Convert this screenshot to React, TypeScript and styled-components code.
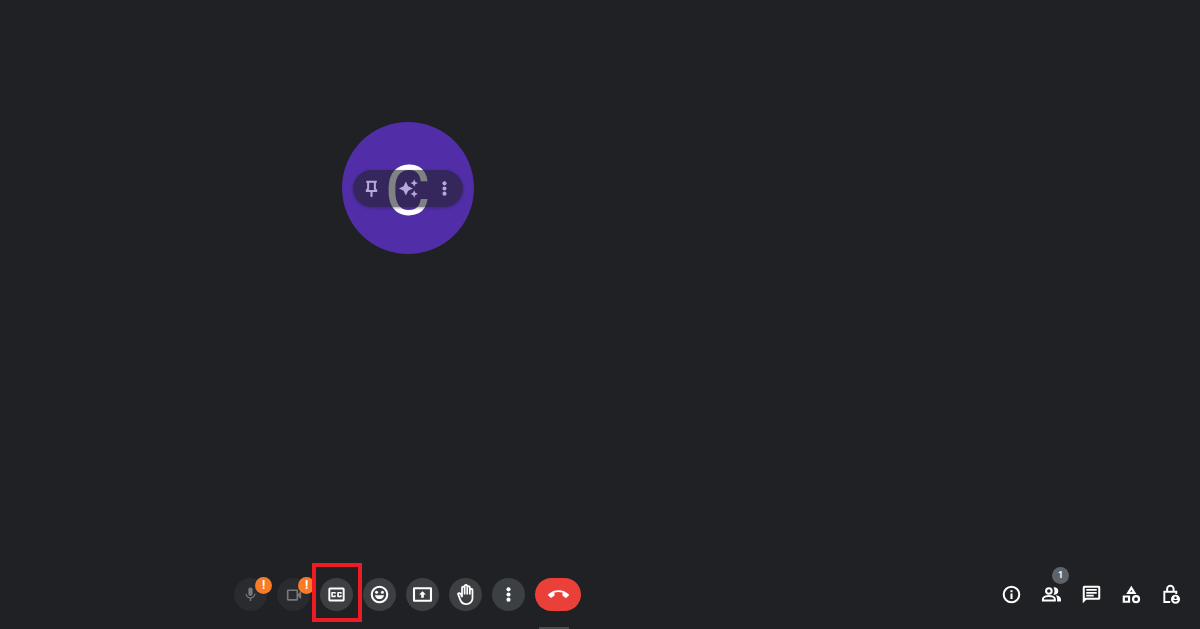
import React from "react";
import styled, { createGlobalStyle } from "styled-components";
import { MdMic, MdCallEnd, MdOutlineBackHand } from "react-icons/md";

const GlobalStyle = createGlobalStyle`
  *, *::before, *::after { box-sizing: border-box; }
  body {
    margin: 0;
    background: #202124;
    color: #fff;
    font-family: Roboto, "Liberation Sans", sans-serif;
  }
  button { font: inherit; color: inherit; border: 0; padding: 0; cursor: pointer; }
  svg { display: block; }
`;

const Meeting = styled.div`
  display: grid;
  grid-template-columns: 68% 32%;
  grid-template-rows: 1fr auto auto;
  min-height: 100vh;
  overflow: hidden;
`;

const Stage = styled.main`
  display: flex;
  justify-content: center;
  align-items: flex-start;
  padding-top: 122px;
`;

const SidePane = styled.div``;

const Avatar = styled.div`
  position: relative;
  display: grid;
  place-items: center;
  width: 132px;
  height: 132px;
  padding: 6px 1px 0 0;
  border-radius: 50%;
  background: #512da8;
  font-size: 71px;
  line-height: 72px;
`;

const TileActions = styled.div`
  position: absolute;
  top: 48px;
  left: 11px;
  display: flex;
  width: 110px;
  height: 37px;
  border-radius: 19px;
  background: rgba(32, 33, 36, 0.57);
  box-shadow: 0 1px 3px rgba(32, 33, 36, 0.4);
`;

const TileButton = styled.button`
  flex: 1;
  display: grid;
  place-items: center;
  background: none;
  color: #b9a7dc;
`;

const Controls = styled.div`
  display: flex;
  justify-content: center;
  gap: 10px;
  padding: 0 1px 16px 0;
`;

const Slot = styled.div`
  position: relative;
`;

const RoundButton = styled.button<{ $off?: boolean }>`
  display: grid;
  place-items: center;
  width: 33px;
  height: 33px;
  border-radius: 50%;
  background: ${(p) => (p.$off ? "#2a2b2e" : "#3c4043")};
  color: ${(p) => (p.$off ? "#77787a" : "#fff")};
`;

const LeaveButton = styled.button`
  display: grid;
  place-items: center;
  width: 46px;
  height: 33px;
  border-radius: 17px;
  background: #ea4039;
`;

const Badge = styled.span<{ $tone: "alert" | "count" }>`
  position: absolute;
  top: ${(p) => (p.$tone === "alert" ? "-1px" : "-11px")};
  right: ${(p) => (p.$tone === "alert" ? "-5px" : "-2px")};
  display: grid;
  place-items: center;
  width: 17px;
  height: 17px;
  border-radius: 50%;
  background: ${(p) => (p.$tone === "alert" ? "#fa7b27" : "#5f6368")};
  font-size: ${(p) => (p.$tone === "alert" ? "12px" : "9px")};
  line-height: 17px;
  font-weight: 700;
`;

const Highlight = styled.span`
  position: absolute;
  inset: -15px -9px -11px -8px;
  border: 4px solid #ed1c24;
  z-index: 1;
  pointer-events: none;
`;

const Panels = styled.div`
  display: flex;
  justify-content: flex-end;
  gap: 8px;
  padding-right: 13px;
`;

const PanelButton = styled.button`
  display: grid;
  place-items: center;
  width: 32px;
  height: 33px;
  background: none;
`;

const Handle = styled.div`
  grid-column: 1;
  justify-self: center;
  width: 30px;
  height: 2px;
  margin-left: 292px;
  background: #4a4b4d;
`;

const Icon = ({ size = 20, children }: { size?: number; children: React.ReactNode }) => (
  <svg width={size} height={size} viewBox="0 0 24 24" fill="currentColor" aria-hidden="true">
    {children}
  </svg>
);

const PinIcon = () => (
  <Icon size={21}>
    <path fillRule="evenodd" d="M6 3h12v2.500h-1V12l1.500 1.500V16h-5.300v5L12 22l-1.200-1v-5H5.500v-2.500L7 12V5.500H6V3Zm3.300 2.500V13l-.8.800h7l-.8-.8V5.500H9.300Z" />
  </Icon>
);

const SparkleIcon = () => (
  <Icon size={21}>
    <path d="M9 4 11.600 9.400 17 12 11.600 14.600 9 20 6.400 14.600 1 12 6.400 9.400ZM18.500 1.500l1.300 3 3 1.300-3 1.300-1.300 3-1.300-3-3-1.300 3-1.300ZM18.500 13.900l1.300 3 3 1.300-3 1.300-1.300 3-1.300-3-3-1.300 3-1.300Z" />
  </Icon>
);

const MoreIcon = () => (
  <Icon size={19}>
    <circle cx="12" cy="5.500" r="2.600" />
    <circle cx="12" cy="12" r="2.600" />
    <circle cx="12" cy="18.500" r="2.600" />
  </Icon>
);

const CameraIcon = () => (
  <Icon size={18}>
    <path fillRule="evenodd" d="M4 4.500h12q1.500 0 1.500 1.500v4.500l4-4v11l-4-4V18q0 1.500-1.500 1.500H4Q2.500 19.500 2.500 18V6Q2.500 4.500 4 4.500Zm.7 2.200v10.600h10.600V6.700H4.700Z" />
  </Icon>
);

const CaptionsIcon = () => (
  <Icon size={21}>
    <path fillRule="evenodd" d="M4.500 4h15q1.800 0 1.800 2v12q0 2-1.800 2h-15q-1.800 0-1.800-2V6q0-2 1.800-2Zm.4 2.200v11.600h14.200V6.200H4.900Z" />
    <path d="M7 9h3.200q1 0 1 1v1.200H9.400v-.5H7.900v2.600h1.500v-.5h1.800V14q0 1-1 1H7q-1 0-1-1v-4q0-1 1-1ZM13.800 9H17q1 0 1 1v1.200h-1.800v-.5h-1.500v2.600h1.500v-.5H18V14q0 1-1 1h-3.200q-1 0-1-1v-4q0-1 1-1Z" />
  </Icon>
);

const SmileIcon = () => (
  <Icon size={19}>
    <circle cx="12" cy="12" r="9.800" fill="none" stroke="currentColor" strokeWidth="2.600" />
    <circle cx="8.300" cy="9.200" r="1.900" />
    <circle cx="15.700" cy="9.200" r="1.900" />
    <path d="M6.200 12.800h11.600c-.5 3-2.900 5-5.800 5s-5.300-2-5.800-5Z" />
  </Icon>
);

const PresentIcon = () => (
  <Icon size={21}>
    <path fillRule="evenodd" d="M2.600 3.600h18.800q1.500 0 1.500 1.500v13.800q0 1.500-1.500 1.500H2.600q-1.500 0-1.500-1.500V5.100q0-1.500 1.500-1.500ZM3.500 6v12h17V6h-17Z" />
    <path d="M12 8.200l3.900 3.900h-2.400v3.500h-3v-3.500H8.100L12 8.200Z" />
  </Icon>
);

const InfoIcon = () => (
  <Icon size={21}>
    <circle cx="12" cy="12" r="8.900" fill="none" stroke="currentColor" strokeWidth="2.300" />
    <path d="M10.800 10.800h2.400V17h-2.400zM10.800 7h2.400v2.400h-2.400z" />
  </Icon>
);

const PeopleIcon = () => (
  <Icon size={21}>
    <g fill="none" stroke="currentColor" strokeWidth="2.300">
      <circle cx="9" cy="8" r="3.200" />
      <path d="M2.200 18.800v-1.600c0-2.400 4-3.500 6.800-3.500s6.800 1.100 6.800 3.500v1.600Z" />
    </g>
    <path d="M14.200 3.900a4.300 4.300 0 1 1 0 8.200c1.700-2.400 1.700-5.800 0-8.200ZM17 12.900c3.200.6 5.800 2 5.800 4.300V20h-4.400v-2.800c0-1.700-.5-3.100-1.400-4.300Z" />
  </Icon>
);

const ChatIcon = () => (
  <Icon size={21}>
    <path fillRule="evenodd" d="M3.800 2h16.400Q22 2 22 3.800v12.400q0 1.800-1.800 1.800H6l-4 4V3.800Q2 2 3.800 2Zm.5 2.200v12.200l.7-.6h14.700V4.200H4.300Z" />
    <path d="M6 5.800h12v2H6zM6 9h12v2H6zM6 12.200h8.500v2H6z" />
  </Icon>
);

const ActivitiesIcon = () => (
  <Icon size={21}>
    <g fill="none" stroke="currentColor" strokeWidth="2.500">
      <path d="M11.800 4.300 15.400 10.200H8.200Z" />
      <path d="M3.200 14.300h6v6h-6Z" />
      <circle cx="17.200" cy="17.300" r="3.400" />
    </g>
  </Icon>
);

const HostLockIcon = () => (
  <Icon size={21}>
    <g fill="none" stroke="currentColor" strokeWidth="2.200">
      <path d="M10.500 20.500H3.800V8.800H17.500v2.500M7 8.500V5.700a3.700 3.700 0 0 1 7.400 0v2.800" />
    </g>
    <path fillRule="evenodd" d="M16.600 12.200a5.200 5.200 0 1 1 0 10.400 5.200 5.200 0 0 1 0-10.400Zm0 2a1.400 1.400 0 1 0 0 2.800 1.400 1.400 0 0 0 0-2.800Zm-2.800 4.500c.6 1 1.600 1.500 2.800 1.500s2.200-.5 2.800-1.500c-1.800-.7-3.800-.7-5.600 0Z" />
  </Icon>
);

export default function App() {
  return (
    <>
      <GlobalStyle />
      <Meeting>
        <Stage>
          <Avatar>
            C
            <TileActions>
              <TileButton aria-label="Pin"><PinIcon /></TileButton>
              <TileButton aria-label="Effects"><SparkleIcon /></TileButton>
              <TileButton aria-label="More tile options"><MoreIcon /></TileButton>
            </TileActions>
          </Avatar>
        </Stage>
        <SidePane />
        <Controls>
          <Slot>
            <RoundButton $off aria-label="Microphone"><MdMic size={17} /></RoundButton>
            <Badge $tone="alert">!</Badge>
          </Slot>
          <Slot>
            <RoundButton $off aria-label="Camera"><CameraIcon /></RoundButton>
            <Badge $tone="alert">!</Badge>
          </Slot>
          <Slot>
            <RoundButton aria-label="Captions"><CaptionsIcon /></RoundButton>
            <Highlight />
          </Slot>
          <RoundButton aria-label="Reactions"><SmileIcon /></RoundButton>
          <RoundButton aria-label="Present now"><PresentIcon /></RoundButton>
          <RoundButton aria-label="Raise hand"><MdOutlineBackHand size={21} /></RoundButton>
          <RoundButton aria-label="More options"><MoreIcon /></RoundButton>
          <LeaveButton aria-label="Leave call"><MdCallEnd size={21} /></LeaveButton>
        </Controls>
        <Panels>
          <PanelButton aria-label="Meeting details"><InfoIcon /></PanelButton>
          <Slot>
            <PanelButton aria-label="People"><PeopleIcon /></PanelButton>
            <Badge $tone="count">1</Badge>
          </Slot>
          <PanelButton aria-label="Chat"><ChatIcon /></PanelButton>
          <PanelButton aria-label="Activities"><ActivitiesIcon /></PanelButton>
          <PanelButton aria-label="Host controls"><HostLockIcon /></PanelButton>
        </Panels>
        <Handle />
      </Meeting>
    </>
  );
}
